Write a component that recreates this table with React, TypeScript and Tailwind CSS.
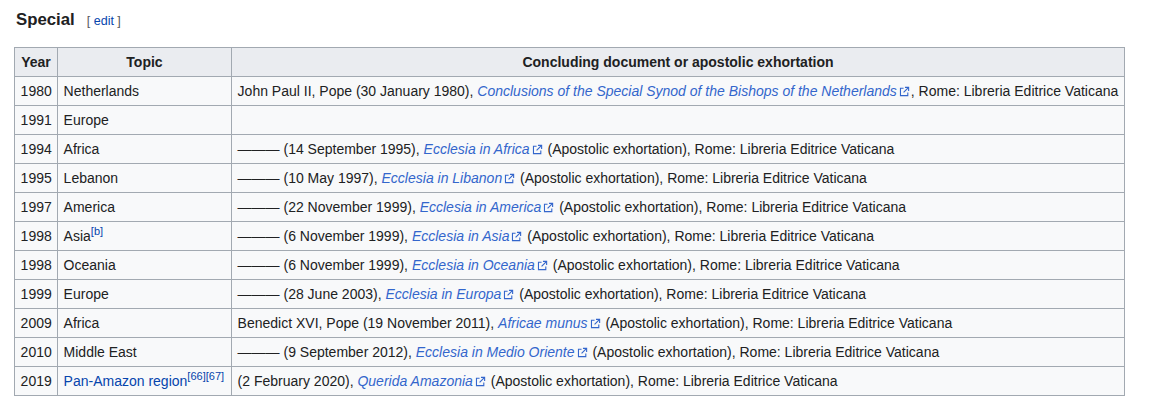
import React from "react";

type Row = {
  year: string;
  topic: React.ReactNode;
  doc: React.ReactNode;
};

const ExtIcon = () => (
  <svg viewBox="0 0 12 12" className="inline-block h-[11px] w-[11px] ml-[2px] mr-[1px] align-[-1px]" fill="none" stroke="#3366cc" strokeWidth="1.2">
    <path d="M5 2.5H1.6v8h8V7" />
    <path d="M6.5 1.5h4v4" />
    <path d="M10.5 1.5 5 7" />
  </svg>
);

const Ext = ({ children }: { children: React.ReactNode }) => (
  <>
    <a className="italic text-[#3366cc]">{children}</a>
    <ExtIcon />
  </>
);

const Sup = ({ children }: { children: React.ReactNode }) => (
  <sup className="text-[11px] text-[#0645ad] leading-none relative -top-[6px]">{children}</sup>
);

const DASH = "———";
const LEV = " (Apostolic exhortation), Rome: Libreria Editrice Vaticana";

const rows: Row[] = [
  {
    year: "1980",
    topic: "Netherlands",
    doc: (
      <>
        John Paul II, Pope (30 January 1980),{" "}
        <Ext>Conclusions of the Special Synod of the Bishops of the Netherlands</Ext>, Rome: Libreria Editrice Vaticana
      </>
    ),
  },
  { year: "1991", topic: "Europe", doc: null },
  { year: "1994", topic: "Africa", doc: <>{DASH} (14 September 1995), <Ext>Ecclesia in Africa</Ext>{LEV}</> },
  { year: "1995", topic: "Lebanon", doc: <>{DASH} (10 May 1997), <Ext>Ecclesia in Libanon</Ext>{LEV}</> },
  { year: "1997", topic: "America", doc: <>{DASH} (22 November 1999), <Ext>Ecclesia in America</Ext>{LEV}</> },
  {
    year: "1998",
    topic: (
      <>
        Asia<Sup>[b]</Sup>
      </>
    ),
    doc: <>{DASH} (6 November 1999), <Ext>Ecclesia in Asia</Ext>{LEV}</>,
  },
  { year: "1998", topic: "Oceania", doc: <>{DASH} (6 November 1999), <Ext>Ecclesia in Oceania</Ext>{LEV}</> },
  { year: "1999", topic: "Europe", doc: <>{DASH} (28 June 2003), <Ext>Ecclesia in Europa</Ext>{LEV}</> },
  { year: "2009", topic: "Africa", doc: <>Benedict XVI, Pope (19 November 2011), <Ext>Africae munus</Ext>{LEV}</> },
  { year: "2010", topic: "Middle East", doc: <>{DASH} (9 September 2012), <Ext>Ecclesia in Medio Oriente</Ext>{LEV}</> },
  {
    year: "2019",
    topic: (
      <>
        <a className="text-[#0645ad]">Pan-Amazon region</a>
        <Sup>[66]</Sup>
        <Sup>[67]</Sup>
      </>
    ),
    doc: <>(2 February 2020), <Ext>Querida Amazonia</Ext>{LEV}</>,
  },
];

export default function App() {
  return (
    <div className="bg-white w-[1160px] h-[414px] text-[#202122] text-[14px]" style={{ fontFamily: '"Liberation Sans", Arial, sans-serif' }}>
      <div className="pl-[16px] pt-[8px] flex items-baseline">
        <h3 className="text-[16.8px] font-bold leading-[24px]">Special</h3>
        <span className="ml-[12px] text-[12.5px] text-[#54595d]">
          [ <a className="text-[#0645ad]">edit</a> ]
        </span>
      </div>
      <table className="mt-[15px] ml-[14px] border-collapse border border-[#a2a9b1] bg-[#f8f9fa] leading-[22px] table-fixed w-[1111px]">
        <colgroup>
          <col className="w-[43px]" />
          <col className="w-[174px]" />
          <col />
        </colgroup>
        <thead>
          <tr className="bg-[#eaecf0]">
            <th className="border border-[#a2a9b1] px-[5.6px] py-[2.8px] font-bold text-center">Year</th>
            <th className="border border-[#a2a9b1] px-[5.6px] py-[2.8px] font-bold text-center">Topic</th>
            <th className="border border-[#a2a9b1] px-[5.6px] py-[2.8px] font-bold text-center">Concluding document or apostolic exhortation</th>
          </tr>
        </thead>
        <tbody>
          {rows.map((r, i) => (
            <tr key={i} className="h-[29px]">
              <td className="border border-[#a2a9b1] px-[5.6px] py-[2.8px] whitespace-nowrap">{r.year}</td>
              <td className="border border-[#a2a9b1] px-[5.6px] py-[2.8px] whitespace-nowrap">{r.topic}</td>
              <td className="border border-[#a2a9b1] px-[5.6px] py-[2.8px] whitespace-nowrap">{r.doc}</td>
            </tr>
          ))}
        </tbody>
      </table>
    </div>
  );
}
